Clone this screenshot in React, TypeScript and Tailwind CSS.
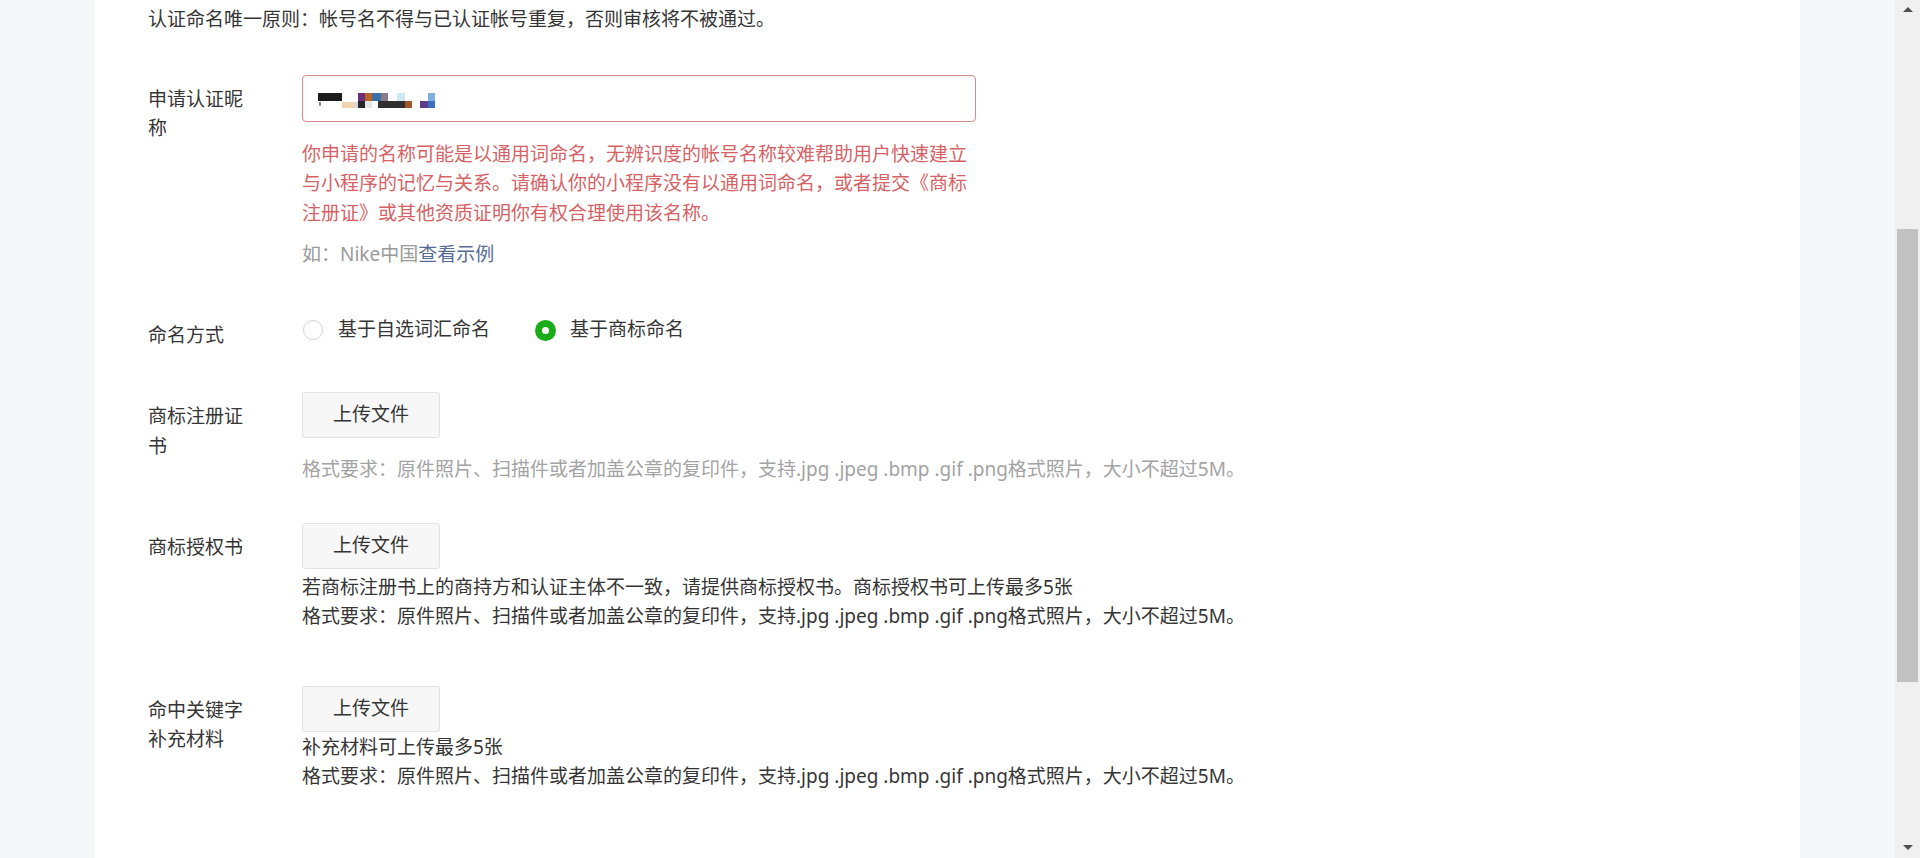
import React from "react";

function BlurredName() {
  // pixelated nickname, drawn as small colour blocks
  const blocks: [number, number, number, number, string][] = [
    [0, 0, 24, 8, "#1c1c1c"],
    [1, 9, 2, 4, "#8a8a8a"],
    [24, 9, 12, 6, "#f2d3ac"],
    [36, 9, 4, 6, "#d9d9d9"],
    [40, 0, 7, 8, "#6a2f78"],
    [40, 8, 7, 7, "#262630"],
    [47, 0, 7, 8, "#b8652a"],
    [47, 8, 7, 7, "#e4e4e4"],
    [54, 0, 9, 8, "#3c6ea8"],
    [63, 0, 7, 8, "#8a7c8e"],
    [60, 8, 27, 7, "#303030"],
    [79, 0, 8, 8, "#cbeaf2"],
    [87, 8, 7, 7, "#a0582c"],
    [102, 8, 8, 7, "#5b3d8a"],
    [110, 0, 7, 8, "#7fb0e0"],
    [110, 8, 7, 7, "#3d6fc0"],
  ];
  return (
    <svg width="118" height="16" viewBox="0 0 118 16" className="block">
      {blocks.map(([x, y, w, h, c], i) => (
        <rect key={i} x={x} y={y} width={w} height={h} fill={c} />
      ))}
    </svg>
  );
}

function Label({ children }: { children: React.ReactNode }) {
  return <div className="w-[100px] mr-[54px] shrink-0 pt-[10px]">{children}</div>;
}

function UploadButton() {
  return (
    <button className="flex h-[46px] w-[138px] items-center justify-center rounded-[3px] border border-[#e2e2e2] bg-[#f7f7f7] text-[#353535]">
      上传文件
    </button>
  );
}

function Scrollbar() {
  return (
    <div className="flex h-full w-[25px] shrink-0 flex-col items-center bg-[#f0f0f0]">
      <div className="mt-[7px] h-0 w-0 border-x-[5px] border-b-[5px] border-x-transparent border-b-[#505050]" />
      <div className="mt-[217px] h-[453px] w-[21px] bg-[#c1c1c1]" />
      <div className="mt-auto mb-[8px] h-0 w-0 border-x-[5px] border-t-[5px] border-x-transparent border-t-[#505050]" />
    </div>
  );
}

export default function App() {
  return (
    <div className="flex h-[858px] w-full overflow-hidden bg-[#f5f7f9] font-['Noto_Sans','Noto_Sans_CJK_SC',sans-serif] text-[19px] leading-[29.5px] text-[#353535]">
      <div className="flex-1 px-[95px]">
        <div className="h-full bg-white pl-[53px] pt-[5px]">
          <p>认证命名唯一原则：帐号名不得与已认证帐号重复，否则审核将不被通过。</p>

          <div className="mt-[40px] flex items-start">
            <Label>申请认证昵称</Label>
            <div>
              <div className="flex h-[47px] w-[674px] items-start rounded-[4px] border border-[#d8898c] pl-[15px] pt-[17px]">
                <BlurredName />
              </div>
              <p className="mt-[18px] w-[674px] text-[#d66265]">
                你申请的名称可能是以通用词命名，无辨识度的帐号名称较难帮助用户快速建立与小程序的记忆与关系。请确认你的小程序没有以通用词命名，或者提交《商标注册证》或其他资质证明你有权合理使用该名称。
              </p>
              <p className="mt-[12px] text-[#9a9a9a]">
                如：Nike中国<span className="text-[#576b95]">查看示例</span>
              </p>
            </div>
          </div>

          <div className="mt-[45px] flex items-start">
            <div className="w-[100px] mr-[54px] shrink-0 pt-[6px]">命名方式</div>
            <div className="flex h-[31px] items-center">
              <span className="ml-[1px] h-[20px] w-[20px] rounded-full border border-[#d4d4d4] bg-white" />
              <span className="ml-[15px]">基于自选词汇命名</span>
              <span className="ml-[45px] flex h-[21px] w-[21px] items-center justify-center rounded-full bg-[#1aad19]">
                <span className="h-[7px] w-[7px] rounded-full bg-white" />
              </span>
              <span className="ml-[14px]">基于商标命名</span>
            </div>
          </div>

          <div className="mt-[42px] flex items-start">
            <Label>商标注册证书</Label>
            <div>
              <UploadButton />
              <p className="mt-[17px] text-[#a3a3a3]">
                格式要求：原件照片、扫描件或者加盖公章的复印件，支持.jpg .jpeg .bmp .gif .png格式照片，大小不超过5M。
              </p>
            </div>
          </div>

          <div className="mt-[38px] flex items-start">
            <Label>商标授权书</Label>
            <div>
              <UploadButton />
              <p className="mt-[4px]">若商标注册书上的商持方和认证主体不一致，请提供商标授权书。商标授权书可上传最多5张</p>
              <p>格式要求：原件照片、扫描件或者加盖公章的复印件，支持.jpg .jpeg .bmp .gif .png格式照片，大小不超过5M。</p>
            </div>
          </div>

          <div className="mt-[54px] flex items-start">
            <Label>命中关键字补充材料</Label>
            <div>
              <UploadButton />
              <p className="mt-[1px]">补充材料可上传最多5张</p>
              <p>格式要求：原件照片、扫描件或者加盖公章的复印件，支持.jpg .jpeg .bmp .gif .png格式照片，大小不超过5M。</p>
            </div>
          </div>
        </div>
      </div>
      <Scrollbar />
    </div>
  );
}
